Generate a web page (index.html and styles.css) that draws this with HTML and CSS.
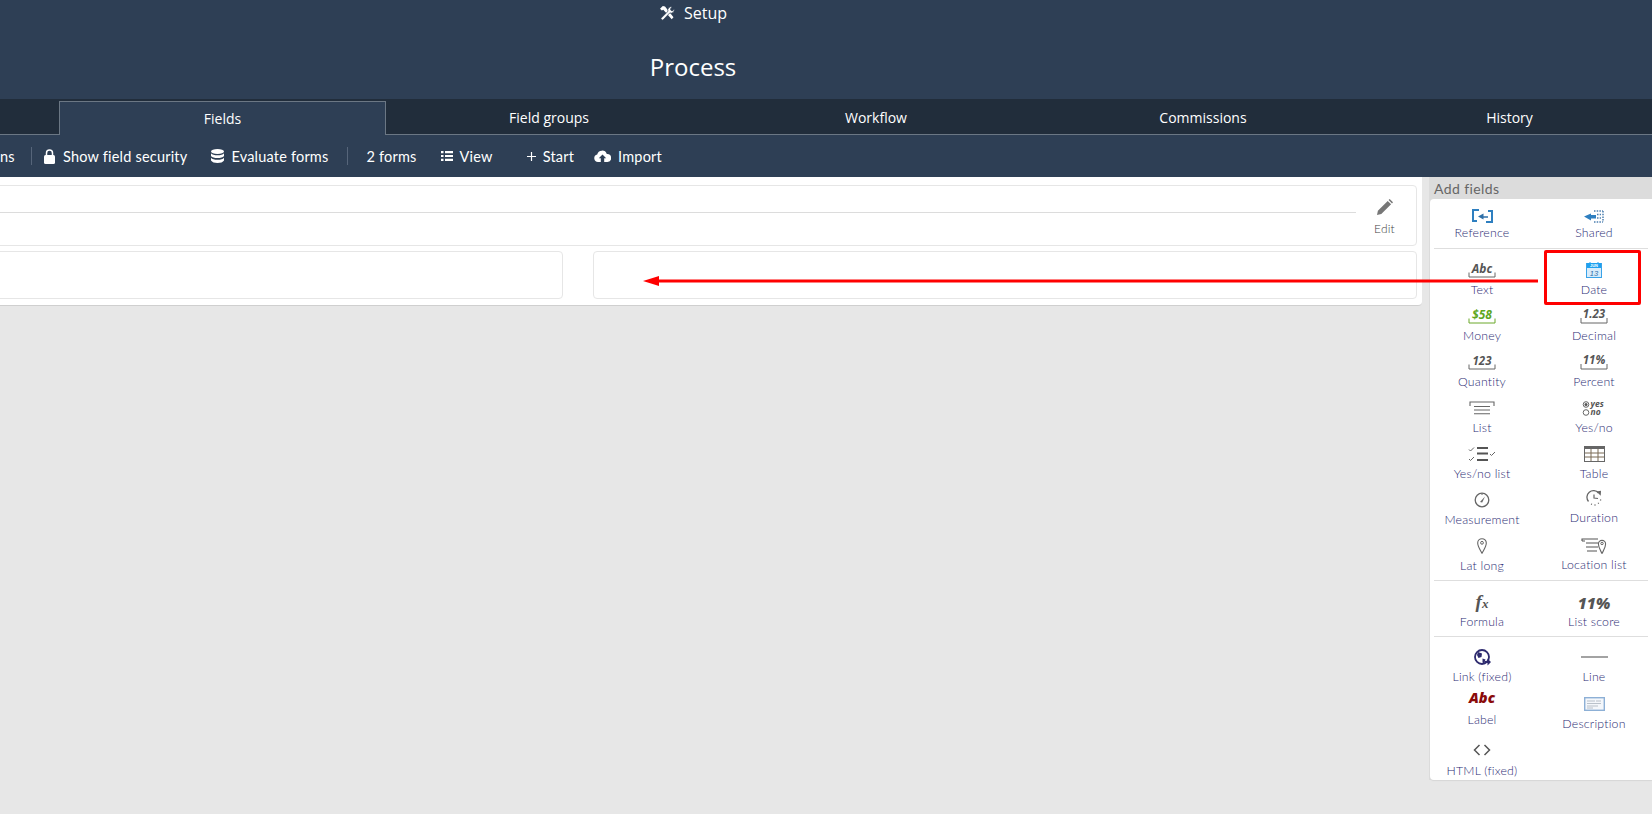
FILE: index.html
```html
<!DOCTYPE html>
<html lang="en">
<head>
<meta charset="utf-8">
<title>Process</title>
<link rel="stylesheet" href="styles.css">
</head>
<body>
<header class="hero">
  <div class="setup">
    <svg class="setup-icon" viewBox="0 0 16 16"><path d="M1 3.800 3.800 1 6 1.500l8.500 10.800-1.800 1.900L4.300 4.800 2.800 5.500z" fill="#fff"/><path d="M1.800 13.400 9 6.300a3.300 3.300 0 0 1 4.200-4.300L11.400 3.900l.6 1.500 1.500.5 1.800-1.800a3.300 3.300 0 0 1-4.500 3.800L3.700 15.300z" fill="#fff" stroke="#2e3f55" stroke-width=".7"/></svg>
    <span>Setup</span>
  </div>
  <h1 class="title">Process</h1>
</header>

<nav class="tabs">
  <div class="tab tab-stub"></div>
  <div class="tab tab-active">Fields</div>
  <div class="tab">Field groups</div>
  <div class="tab">Workflow</div>
  <div class="tab">Commissions</div>
  <div class="tab tab-last">History</div>
</nav>

<div class="toolbar">
  <span class="tb-item tb-clip">ns</span>
  <span class="tb-sep sep-a"></span>
  <span class="tb-item tb-lock"><svg class="tb-icon icon-lock" width="11" height="15" viewBox="0 0 11 15"><path d="M2.500 6V4a3 3 0 0 1 6 0v2" fill="none" stroke="#fff" stroke-width="1.500"/><rect y="6" width="11" height="9" rx="1.500" fill="#fff"/></svg>Show field security</span>
  <span class="tb-item tb-db"><svg class="tb-icon" width="13" height="14" viewBox="0 0 13 14"><ellipse cx="6.500" cy="2.500" rx="6.500" ry="2.500" fill="#fff"/><path d="M0 4.200c1 1.600 3.500 2 6.500 2s5.500-.4 6.500-2V7c-1 1.400-3.500 2-6.500 2S1 8.400 0 7zM0 8.700c1 1.600 3.500 2 6.500 2s5.500-.4 6.500-2v2.800C12 13.200 9.500 14 6.500 14S1 13.200 0 11.500z" fill="#fff"/></svg>Evaluate forms</span>
  <span class="tb-sep sep-b"></span>
  <span class="tb-item tb-forms">2 forms</span>
  <span class="tb-item tb-view"><svg class="tb-icon" width="12" height="10" viewBox="0 0 12 10"><path d="M0 0h2.500v2.200H0zM4 0h8v2.200H4zM0 3.900h2.500v2.200H0zM4 3.900h8v2.200H4zM0 7.800h2.500V10H0zM4 7.800h8V10H4z" fill="#fff"/></svg>View</span>
  <span class="tb-item tb-start"><svg class="tb-icon" width="9" height="9" viewBox="0 0 9 9"><path d="M3.900 0h1.200v3.900H9v1.200H5.100V9H3.900V5.100H0V3.900h3.900z" fill="#fff"/></svg>Start</span>
  <span class="tb-item tb-import"><svg class="tb-icon" width="17" height="12" viewBox="0 0 17 12"><path d="M4 12a3.800 3.800 0 0 1-.8-7.500A5 5 0 0 1 12.800 4 4 4 0 0 1 13.500 12H10.200V8.200h2L8.500 4.400 4.800 8.200h2V12z" fill="#fff"/></svg>Import</span>
</div>

<main class="workspace">
  <section class="canvas">
    <div class="card card-head">
      <div class="card-rule"></div>
      <div class="edit">
        <svg width="16" height="16" viewBox="0 0 16 16"><path d="M0 16l.9-4.300L10.700 1.900l3.400 3.400L4.300 15.100zM11.600 1l1.100-1 3.300 3.300-1 1.100z" fill="#777"/></svg>
        <span>Edit</span>
      </div>
    </div>
    <div class="slots">
      <div class="card slot slot-a"></div>
      <div class="card slot slot-b"></div>
    </div>
  </section>

  <aside class="sidebar">
    <div class="side-title">Add fields</div>
    <div class="side-panel">

      <div class="group group-1">
        <div class="field"><span class="ficon"><svg width="21" height="14" viewBox="0 0 21 14" fill="none"><path d="M7 1H1v11h4" stroke="#2e7fc0" stroke-width="2"/><path d="M14 13h6V2h-4" stroke="#2e7fc0" stroke-width="2"/><path d="M16 8H9" stroke="#2e6fa8" stroke-width="1.600"/><path d="M11.500 4.500 6 7.500l5.500 3z" fill="#2e6fa8"/></svg></span><span class="flabel">Reference</span></div>
        <div class="field"><span class="ficon"><svg width="20" height="13" viewBox="0 0 20 13" fill="none"><path d="M10 1h9M10 12h9M19 1v11M13 4.500h4M13 8h4" stroke="#4c7fb0" stroke-width="1.500" stroke-dasharray="1.500 1.200"/><path d="M12 5v3.500H7V10.500L0 6.500 7 3.500v1.500z" fill="#2e7fc0"/></svg></span><span class="flabel">Shared</span></div>
      </div>

      <div class="group group-2">
        <div class="field"><span class="ficon"><svg width="28" height="20" viewBox="0 0 28 20"><text class="ic-text" x="14" y="12.500" font-size="12">Abc</text><path d="M1 12.500v4.500h26v-4.500" class="bracket"/></svg></span><span class="flabel">Text</span></div>
        <div class="field"><span class="ficon"><svg width="16" height="16" viewBox="0 0 16 16"><rect x=".5" y="1.500" width="15" height="14" fill="#d8ecfb" stroke="#3aa3e8"/><rect x="1" y="1" width="14" height="5" fill="#1ea1f0"/><path d="M4 0v2.500M12 0v2.500" stroke="#1ea1f0"/><text x="8" y="5.400" class="cal-top">JUN</text><text x="8" y="13.500" class="cal-num">13</text></svg></span><span class="flabel">Date</span></div>

        <div class="field"><span class="ficon"><svg width="28" height="20" viewBox="0 0 28 20"><text class="ic-text ic-green" x="14" y="12.500" font-size="12">$58</text><path d="M1 12.500v4.500h26v-4.500" class="bracket bracket-green"/></svg></span><span class="flabel">Money</span></div>
        <div class="field"><span class="ficon"><svg width="28" height="20" viewBox="0 0 28 20"><text class="ic-text" x="14" y="11.500" font-size="11.500">1.23</text><path d="M1 12v5h26v-5" class="bracket"/></svg></span><span class="flabel">Decimal</span></div>

        <div class="field"><span class="ficon"><svg width="28" height="20" viewBox="0 0 28 20"><text class="ic-text" x="14" y="12.500" font-size="11.500">123</text><path d="M1 12.500v4.500h26v-4.500" class="bracket"/></svg></span><span class="flabel">Quantity</span></div>
        <div class="field"><span class="ficon"><svg width="28" height="20" viewBox="0 0 28 20"><text class="ic-text" x="14" y="12" font-size="11.500">11%</text><path d="M1 12v5h26v-5" class="bracket"/></svg></span><span class="flabel">Percent</span></div>

        <div class="field"><span class="ficon"><svg width="26" height="14" viewBox="0 0 26 14" fill="none"><path d="M1 5V1h24v4M5 5.500h16M5 9h16M5 12.700h16" stroke="#666" stroke-width="1.100"/></svg></span><span class="flabel">List</span></div>
        <div class="field field-tall"><span class="ficon"><svg width="24" height="17" viewBox="0 0 24 17"><circle cx="4" cy="4.500" r="2.800" fill="none" stroke="#666"/><circle cx="4" cy="4.500" r="1.500" fill="#555"/><circle cx="4" cy="12.500" r="2.800" fill="none" stroke="#666"/><text class="ic-small" x="8.500" y="7">yes</text><text class="ic-small" x="8.500" y="15">no</text></svg></span><span class="flabel">Yes/no</span></div>

        <div class="field field-tall"><span class="ficon"><svg width="28" height="16" viewBox="0 0 28 16" fill="none"><path d="M1 3.500l1.500 1.500L6 1.500M1 13l1.500 1.500L6 11" stroke="#666"/><path d="M9 2h11M9 7.500h11M9 14h11" stroke="#555" stroke-width="2"/><path d="M22 8l1.500 1.500L27 6" stroke="#666"/></svg></span><span class="flabel">Yes/no list</span></div>
        <div class="field field-tall"><span class="ficon"><svg width="21" height="16" viewBox="0 0 21 16"><rect x=".5" y=".5" width="20" height="15" fill="#fff" stroke="#666"/><rect width="21" height="3" fill="#666"/><path d="M7 3v12M14 3v12M1 7h19M1 11h19" stroke="#7a6a55"/></svg></span><span class="flabel">Table</span></div>

        <div class="field"><span class="ficon"><svg width="16" height="16" viewBox="0 0 16 16" fill="none"><circle cx="8" cy="8" r="6.800" stroke="#666" stroke-width="1.300"/><path d="M6 10l5-5.500-2.800 6z" fill="#666"/><path d="M8 1.500v1.500" stroke="#666"/></svg></span><span class="flabel">Measurement</span></div>
        <div class="field field-up"><span class="ficon"><svg width="17" height="16" viewBox="0 0 17 16" fill="none"><path d="M12.500 3A6.500 6.500 0 1 0 2.500 11.500" stroke="#666" stroke-width="1.300"/><path d="M5 14l1 .4M8.500 15h1M12 13.500l.8-.6M14.400 10.500l.4-1" stroke="#666" stroke-width="1.300"/><path d="M8 4.500V8l4 .5" stroke="#666" stroke-width="1.200"/><path d="M10.500 1.500 15 .8l-.3 5z" fill="#666"/></svg></span><span class="flabel">Duration</span></div>

        <div class="field"><span class="ficon"><svg width="10" height="16" viewBox="0 0 10 16" fill="none"><path d="M5 15.200C3 11.500.7 8.500.7 5a4.300 4.300 0 0 1 8.600 0C9.300 8.500 7 11.500 5 15.200z" stroke="#666" stroke-width="1.100"/><circle cx="5" cy="4.800" r="1.400" stroke="#666"/></svg></span><span class="flabel">Lat long</span></div>
        <div class="field field-snug"><span class="ficon"><svg width="26" height="16" viewBox="0 0 26 16" fill="none"><path d="M1 3V1h16M5 5h12M5 9h12M6 13h10M1 3h3" stroke="#555" stroke-width="1.100"/><path d="M21 15.500c-1.800-3.500-3.600-6-3.600-9.500a3.600 3.600 0 0 1 7.200 0c0 3.500-1.800 6-3.600 9.500z" stroke="#666" fill="#fff" stroke-width="1.100"/><circle cx="21" cy="5.500" r="1.200" stroke="#666"/></svg></span><span class="flabel">Location list</span></div>
      </div>

      <div class="group group-3">
        <div class="field"><span class="ficon"><span class="fx">f<i>x</i></span></span><span class="flabel">Formula</span></div>
        <div class="field"><span class="ficon"><span class="score">11%</span></span><span class="flabel">List score</span></div>
      </div>

      <div class="group group-4">
        <div class="field field-link"><span class="ficon"><svg width="17" height="17" viewBox="0 0 17 17"><circle cx="8" cy="8" r="7" fill="none" stroke="#2d2a6e" stroke-width="1.800"/><path d="M4 3l4 1.500L7.500 8 4.500 9 3 6zM8.500 9.500l3 1-1.500 4-1.500-1z" fill="#2d2a6e"/><path d="M10.500 12h3V9.500l3.500 3.500-3.500 3.500V14h-3z" fill="#2d2a6e"/></svg></span><span class="flabel">Link (fixed)</span></div>
        <div class="field field-link"><span class="ficon"><svg width="27" height="2" viewBox="0 0 27 2"><path d="M0 1h27" stroke="#666" stroke-width="1.200"/></svg></span><span class="flabel">Line</span></div>

        <div class="field field-label"><span class="ficon"><span class="abc-red">Abc</span></span><span class="flabel">Label</span></div>
        <div class="field field-desc"><span class="ficon"><svg width="21" height="14" viewBox="0 0 21 14"><rect x=".7" y=".7" width="19.600" height="12.600" fill="#f4f7fb" stroke="#8db0d6" stroke-width="1.400"/><path d="M3 4h8M12 4h5M3 6.500h14M3 9h11M3 11h6" stroke="#a9b3be" stroke-width=".8"/></svg></span><span class="flabel">Description</span></div>

        <div class="field field-html"><span class="ficon"><svg width="18" height="12" viewBox="0 0 18 12" fill="none"><path d="M6.500 1 1.500 6l5 5M11.500 1l5 5-5 5" stroke="#555" stroke-width="1.500"/></svg></span><span class="flabel">HTML (fixed)</span></div>
      </div>

    </div>
  </aside>
</main>

<div class="hint-box"></div>
<svg class="hint-arrow" width="896" height="12" viewBox="0 0 896 12"><path d="M16 4.500H895V7.500H16z" fill="#ff0000"/><path d="M0 6 16 1V11z" fill="#ff0000"/></svg>
</body>
</html>
```
FILE: styles.css
```css
* { box-sizing: border-box; }
html, body { margin: 0; height: 100%; }
body {
  position: relative;
  width: 1652px;
  height: 814px;
  overflow: hidden;
  background: #e7e7e7;
  font-family: "Open Sans", "Liberation Sans", sans-serif;
  color: #fff;
}

/* header */
.hero {
  height: 99px;
  background: #2e3f55;
  text-align: center;
  padding: 2px 266px 0 0;
}
.setup {
  display: flex;
  justify-content: center;
  align-items: center;
  gap: 9px;
  height: 22px;
  font-size: 16px;
}
.setup-icon { width: 16px; height: 16px; }
.title {
  margin: 25px 0 0;
  font-size: 24px;
  font-weight: 400;
  line-height: 36px;
}

/* tabs */
.tabs {
  display: flex;
  height: 36px;
  background: #212d3b;
  border-bottom: 1px solid #6b7784;
}
.tab {
  flex: 0 0 327px;
  padding-right: 1px;
  text-align: center;
  font-size: 14px;
  line-height: 38px;
}
.tab-stub { flex-basis: 59px; }
.tab-last { flex-basis: 286px; }
.tab-active {
  height: 34px;
  margin-top: 2px;
  background: #2e3f55;
  border: 1px solid #6b7784;
  border-bottom: 0;
  line-height: 34px;
  padding-right: 0;
}

/* toolbar */
.toolbar {
  display: flex;
  align-items: center;
  height: 42px;
  background: #2e3f55;
  font-family: Lato, "Liberation Sans", sans-serif;
  font-size: 14.500px;
  letter-spacing: .2px;
}
.tb-item { display: inline-flex; align-items: center; white-space: nowrap; }
.tb-clip { flex: 0 0 12px; min-width: 0; }
.tb-icon { margin-right: 7px; }
.icon-lock { margin-right: 8px; }
.tb-sep { width: 1px; height: 18px; background: #56657a; }
.sep-a { margin-left: 19px; }
.tb-lock { margin-left: 12px; }
.tb-db { margin-left: 24px; }
.sep-b { margin-left: 19px; }
.tb-forms { margin-left: 18px; }
.tb-view { margin-left: 24px; }
.tb-start { margin-left: 34px; }
.tb-import { margin-left: 20px; }

/* workspace */
.workspace {
  display: flex;
  height: 637px;
}
.canvas {
  flex: 0 0 1422px;
  height: 129px;
  background: #fff;
  border-bottom: 1px solid #cfcfcf;
  border-bottom-right-radius: 4px;
  padding: 8px 5px 0 0;
}
.card {
  background: #fff;
  border: 1px solid #e6e6e6;
  border-radius: 4px;
}
.card-head {
  display: flex;
  height: 61px;
  margin-left: -10px;
}
.card-rule {
  flex: 1;
  height: 1px;
  margin-top: 26px;
  background: #dcdcdc;
}
.edit {
  flex: 0 0 57px;
  margin-right: 3px;
  display: flex;
  flex-direction: column;
  align-items: center;
  padding-top: 13px;
  font-family: Lato, "Liberation Sans", sans-serif;
  font-weight: 300;
  font-size: 12px;
  line-height: 16px;
  letter-spacing: .2px;
  color: #444;
}
.edit span { margin-top: 6px; }
.slots {
  display: flex;
  gap: 30px;
  margin-top: 5px;
  margin-left: -10px;
}
.slot { height: 48px; }
.slot-a { flex: 0 0 573px; }
.slot-b { flex: 1; }

/* sidebar */
.sidebar {
  flex: 0 0 223px;
  margin-left: 7px;
  height: 603px;
  background: #dcdcdc;
}
.side-title {
  height: 22px;
  padding-left: 5px;
  font-family: Lato, "Liberation Sans", sans-serif;
  font-size: 14px;
  line-height: 24px;
  letter-spacing: .4px;
  color: #666;
}
.side-panel {
  margin-left: 1px;
  height: 581px;
  background: #fff;
  border-radius: 4px 0 0 4px;
  box-shadow: 0 1px 1px #d6d6d6;
  padding: 0 4px;
  overflow: hidden;
}
.group {
  display: grid;
  grid-template-columns: 96px 96px;
  column-gap: 16px;
}
.group-1 { height: 50px; padding-top: 5px; border-bottom: 1px solid #dedede; }
.group-2 { height: 332px; padding-top: 9px; grid-auto-rows: 46px; border-bottom: 1px solid #dedede; }
.group-3 { height: 56px; padding-top: 10px; border-bottom: 1px solid #dedede; }
.group-4 { padding-top: 9px; grid-template-rows: 39px 53px 42px; }

.field {
  display: flex;
  flex-direction: column;
  align-items: center;
  font-family: Lato, "Liberation Sans", sans-serif;
  white-space: nowrap;
}
.ficon {
  display: flex;
  align-items: center;
  justify-content: center;
  height: 24px;
}
.flabel {
  font-size: 12.300px;
  font-weight: 300;
  line-height: 16px;
  letter-spacing: .2px;
  color: #2c2c74;
}
.group-1 .flabel { margin-top: -3px; }
.group-3 .flabel { margin-top: -1px; }
.field-up { margin-top: -2px; }
.field-snug .flabel { margin-top: -1px; }
.field-link .flabel { margin-top: 1px; }
.field-label .flabel { margin-top: 3px; }
.field-desc { margin-top: 7px; }
.field-html .flabel { margin-top: 1px; }

/* icon parts */
.ic-text {
  font-family: "Open Sans", "Liberation Sans", sans-serif;
  font-weight: 700;
  font-style: italic;
  text-anchor: middle;
  fill: #555;
}
.ic-green { fill: #5ea620; }
.bracket { fill: none; stroke: #666; stroke-width: 1; }
.bracket-green { stroke: #6aa82a; }
.ic-small {
  font-family: "Open Sans", "Liberation Sans", sans-serif;
  font-weight: 700;
  font-style: italic;
  font-size: 8.500px;
  fill: #555;
}
.cal-top {
  font-family: "Liberation Sans", sans-serif;
  font-size: 4px;
  font-weight: 700;
  text-anchor: middle;
  fill: #fff;
}
.cal-num {
  font-family: "Liberation Sans", sans-serif;
  font-size: 7.500px;
  font-style: italic;
  text-anchor: middle;
  fill: #2c6ea6;
}
.fx {
  font-family: "Liberation Serif", serif;
  font-style: italic;
  font-weight: 700;
  font-size: 19px;
  line-height: 22px;
  color: #555;
}
.fx i { font-size: 13px; font-weight: 700; }
.score {
  font-family: "Open Sans", "Liberation Sans", sans-serif;
  font-style: italic;
  font-weight: 800;
  font-size: 15.500px;
  color: #555;
}
.abc-red {
  font-family: "Open Sans", "Liberation Sans", sans-serif;
  font-style: italic;
  font-weight: 800;
  font-size: 14.500px;
  color: #8a0a0a;
}

/* annotation overlay */
.hint-box {
  position: absolute;
  left: 1544px;
  top: 250px;
  width: 97px;
  height: 55px;
  border: 3px solid #ff0000;
  border-radius: 2px;
}
.hint-arrow {
  position: absolute;
  left: 643px;
  top: 275px;
}
```
